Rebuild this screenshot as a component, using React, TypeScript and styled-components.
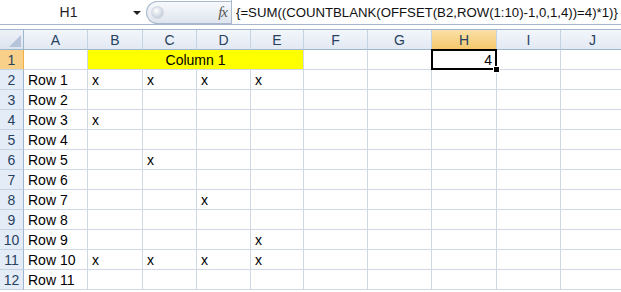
import styled, { createGlobalStyle, css } from "styled-components";
import { FC, Fragment } from "react";

const GlobalStyle = createGlobalStyle`
  html, body {
    margin: 0;
    padding: 0;
    background: #ffffff;
  }
  body {
    font-family: "Liberation Sans", Arial, sans-serif;
    overflow: hidden;
  }
`;

const COLS = ["A", "B", "C", "D", "E", "F", "G", "H", "I", "J"];
const WIDTHS = [24, 64, 55, 54, 54, 53, 64, 64, 65, 64, 64];

const Window = styled.div`
  width: 621px;
  height: 292px;
  overflow: hidden;
  background: #ffffff;
`;

const FormulaBar = styled.div`
  display: flex;
  align-items: stretch;
  height: 24px;
  border-bottom: 1px solid #a7b6ca;
  background: #ffffff;
`;

const NameBox = styled.div`
  flex: 0 0 146px;
  display: flex;
  align-items: center;
  font-size: 14px;
  color: #1f1f1f;

  .name {
    flex: 1;
    text-align: center;
    padding-left: 4px;
  }
  .arrow {
    width: 0;
    height: 0;
    border-left: 4px solid transparent;
    border-right: 4px solid transparent;
    border-top: 4px solid #222;
    margin-right: 5px;
    margin-top: 2px;
  }
`;

const FxPill = styled.div`
  flex: 0 0 85px;
  margin: 1px 0 0 0;
  border: 1px solid #a9b8cc;
  border-right: none;
  border-radius: 12px 0 0 12px;
  background: linear-gradient(#f7f9fc, #dfe5ee);
  display: flex;
  align-items: center;
  justify-content: space-between;
  padding: 0 4px 0 4px;
  box-sizing: border-box;

  .knob {
    width: 11px;
    height: 11px;
    border-radius: 50%;
    background: radial-gradient(circle at 40% 35%, #ffffff, #c9d1dc 70%);
    border: 1px solid #d3d9e2;
  }
  .fx {
    font-family: "Liberation Serif", "Times New Roman", serif;
    font-style: italic;
    font-size: 15px;
    color: #555;
    letter-spacing: -1px;
  }
`;

const FormulaText = styled.div`
  flex: 1;
  min-width: 0;
  overflow: hidden;
  border-left: 1px solid #a9b8cc;
  display: flex;
  align-items: center;
  padding-left: 4px;
  font-size: 13.2px;
  color: #111;
  white-space: nowrap;
`;

const Gap = styled.div`
  height: 4px;
  background: #ffffff;
`;

const Sheet = styled.div`
  display: grid;
  grid-template-columns: ${WIDTHS.map((w) => `${w}px`).join(" ")};
  grid-auto-rows: 20px;
  border-top: 1px solid #9eb6ce;
`;

const headerBase = css`
  display: flex;
  align-items: center;
  justify-content: center;
  font-size: 14px;
  color: #27415f;
  box-sizing: border-box;
  border-right: 1px solid #9eb6ce;
  border-bottom: 1px solid #9eb6ce;
`;

const Corner = styled.div`
  ${headerBase};
  position: relative;
  background: linear-gradient(#eef2f8, #dce4ef);

  &::after {
    content: "";
    position: absolute;
    right: 2px;
    bottom: 2px;
    width: 0;
    height: 0;
    border-left: 12px solid transparent;
    border-bottom: 12px solid #b5c4d8;
  }
`;

const ColHead = styled.div<{ $active?: boolean }>`
  ${headerBase};
  border-right-color: #c5d2e2;
  background: ${(p) =>
    p.$active
      ? "linear-gradient(#fbe0a8, #f6c86b)"
      : "linear-gradient(#f3f6fb, #e2e9f3)"};
  border-bottom-color: ${(p) => (p.$active ? "#f0b041" : "#9eb6ce")};
`;

const RowHead = styled.div<{ $active?: boolean }>`
  ${headerBase};
  border-bottom-color: #c5d2e2;
  background: ${(p) => (p.$active ? "#f8d08a" : "#e4ecf7")};
  border-right-color: ${(p) => (p.$active ? "#f0b041" : "#9eb6ce")};
`;

const Cell = styled.div<{ $align?: "left" | "center" | "right"; $span?: number; $fill?: string; $selected?: boolean }>`
  position: relative;
  display: flex;
  align-items: center;
  justify-content: ${(p) =>
    p.$align === "center" ? "center" : p.$align === "right" ? "flex-end" : "flex-start"};
  padding: 0 4px;
  box-sizing: border-box;
  font-size: 14px;
  color: #000;
  white-space: nowrap;
  border-right: 1px solid #d0d7e5;
  border-bottom: 1px solid #d0d7e5;
  background: ${(p) => p.$fill || "transparent"};
  ${(p) => p.$span && `grid-column: span ${p.$span};`}

  ${(p) =>
    p.$selected &&
    css`
      &::after {
        content: "";
        position: absolute;
        left: -1px;
        top: -1px;
        right: -1px;
        bottom: -1px;
        border: 2px solid #000;
        pointer-events: none;
      }
      &::before {
        content: "";
        position: absolute;
        right: -4px;
        bottom: -4px;
        width: 5px;
        height: 5px;
        background: #000;
        border: 1px solid #fff;
        z-index: 2;
      }
    `}
`;

// marks in columns B..E for each data row (sheet rows 2-12)
const rows: { label: string; marks: string[] }[] = [
  { label: "Row 1", marks: ["B", "C", "D", "E"] },
  { label: "Row 2", marks: [] },
  { label: "Row 3", marks: ["B"] },
  { label: "Row 4", marks: [] },
  { label: "Row 5", marks: ["C"] },
  { label: "Row 6", marks: [] },
  { label: "Row 7", marks: ["D"] },
  { label: "Row 8", marks: [] },
  { label: "Row 9", marks: ["E"] },
  { label: "Row 10", marks: ["B", "C", "D", "E"] },
  { label: "Row 11", marks: [] },
];

const App: FC = () => {
  return (
    <Window>
      <GlobalStyle />
      <FormulaBar>
        <NameBox>
          <span className="name">H1</span>
          <span className="arrow" />
        </NameBox>
        <FxPill>
          <span className="knob" />
          <span className="fx">fx</span>
        </FxPill>
        <FormulaText>{"{=SUM((COUNTBLANK(OFFSET(B2,ROW(1:10)-1,0,1,4))=4)*1)}"}</FormulaText>
      </FormulaBar>
      <Gap />
      <Sheet>
        <Corner />
        {COLS.map((c) => (
          <ColHead key={c} $active={c === "H"}>
            {c}
          </ColHead>
        ))}

        <RowHead $active>1</RowHead>
        <Cell />
        <Cell $span={4} $align="center" $fill="#ffff00">
          Column 1
        </Cell>
        <Cell />
        <Cell />
        <Cell $selected $align="right">
          4
        </Cell>
        <Cell />
        <Cell />

        {rows.map((row, i) => (
          <Fragment key={row.label}>
            <RowHead>{i + 2}</RowHead>
            <Cell>{row.label}</Cell>
            {COLS.slice(1).map((c) => (
              <Cell key={c}>{row.marks.includes(c) ? "x" : ""}</Cell>
            ))}
          </Fragment>
        ))}
      </Sheet>
    </Window>
  );
};

export default App;
